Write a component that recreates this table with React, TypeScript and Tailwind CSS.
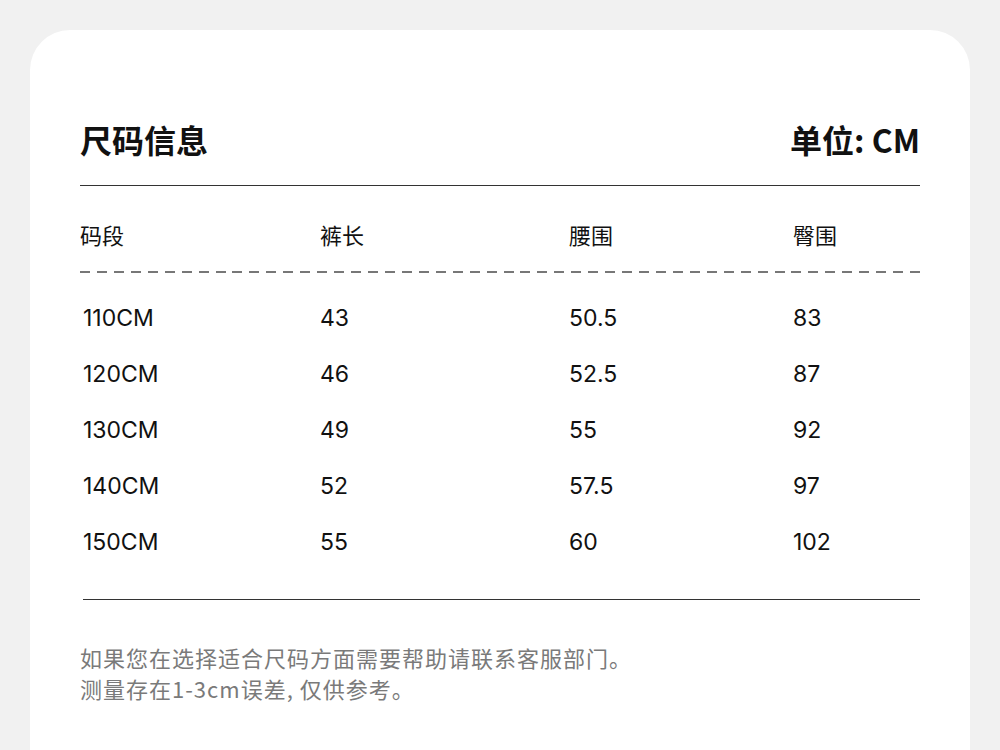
import React from 'react';

const rows = [
  ['110CM', '43', '50.5', '83'],
  ['120CM', '46', '52.5', '87'],
  ['130CM', '49', '55', '92'],
  ['140CM', '52', '57.5', '97'],
  ['150CM', '55', '60', '102'],
];

const font = { fontFamily: '"Noto Sans CJK SC", "Noto Sans", sans-serif' };
const numFont = { fontFamily: 'Inter, "Noto Sans CJK SC", sans-serif' };

export default function App() {
  return (
    <div className="min-h-screen bg-[#f1f1f1] px-[30px] pt-[30px]" style={font}>
      <div className="h-[720px] rounded-t-[40px] bg-white px-[50px] pt-[87px]">
        <div className="flex items-center justify-between leading-[44px] text-[#111]">
          <h1 className="text-[32px] font-bold">尺码信息</h1>
          <div className="text-[32px] font-bold">单位: CM</div>
        </div>

        <div className="mt-[24px] h-px bg-[#333]" />

        <div className="mt-[33px] grid grid-cols-[240px_249px_224px_1fr] text-[22px] leading-[30px] text-[#111]">
          <div>码段</div>
          <div>裤长</div>
          <div>腰围</div>
          <div>臀围</div>
        </div>

        <div className="mt-[22px] h-[2px] bg-[repeating-linear-gradient(to_right,#777_0_10px,transparent_10px_16.94px)]" />

        <div className="mt-[17px]" style={numFont}>
          {rows.map((r) => (
            <div
              key={r[0]}
              className="grid h-[56px] grid-cols-[240px_249px_224px_1fr] items-center text-[23px] text-[#111]"
            >
              <div className="pl-[3px]">{r[0]}</div>
              <div>{r[1]}</div>
              <div>{r[2]}</div>
              <div>{r[3]}</div>
            </div>
          ))}
        </div>

        <div className="ml-[3px] mt-[29px] h-px bg-[#333]" />

        <div className="mt-[42px] text-[22px] leading-[31px] tracking-[1px] text-[#7a7a7a]">
          <p>如果您在选择适合尺码方面需要帮助请联系客服部门。</p>
          <p>测量存在1-3cm误差, 仅供参考。</p>
        </div>
      </div>
    </div>
  );
}
